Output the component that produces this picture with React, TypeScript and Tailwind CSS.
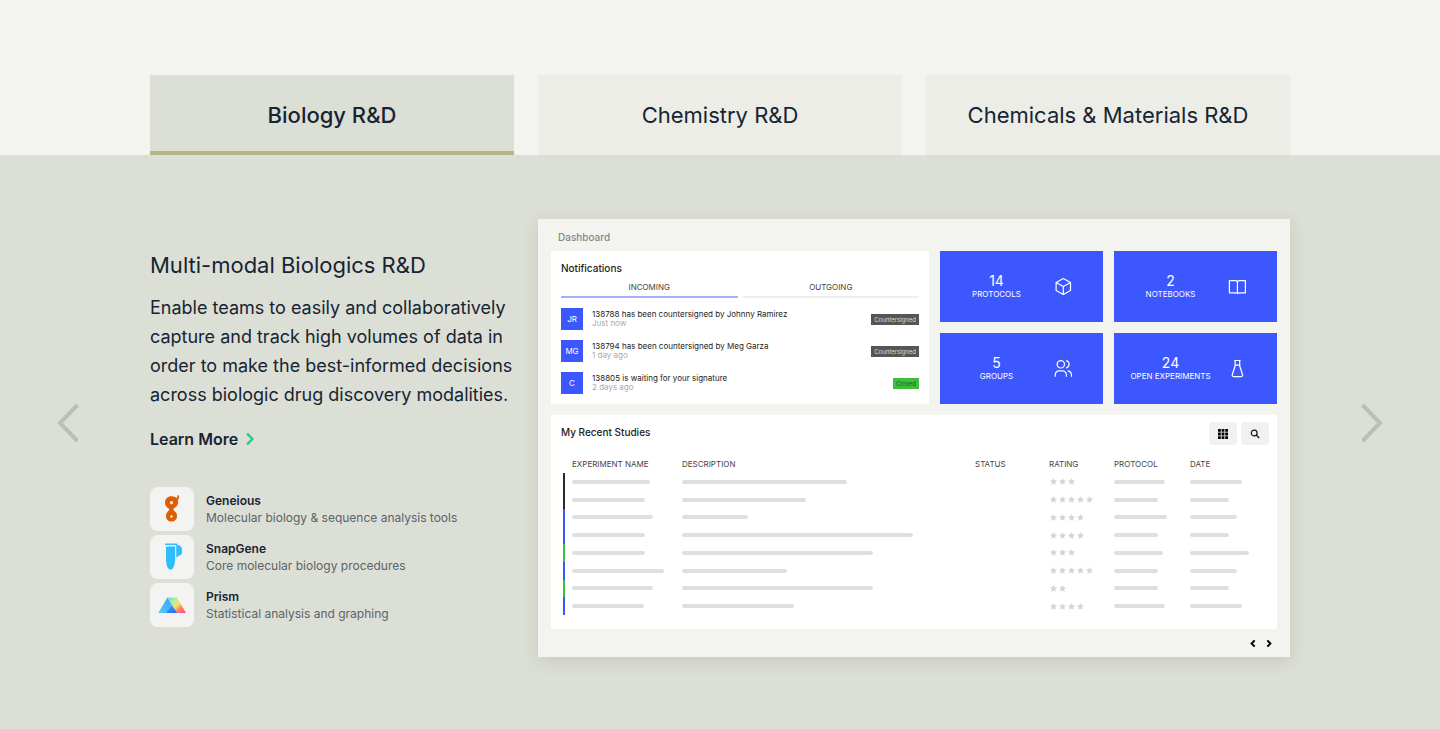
import { useState } from 'react';
import type { ReactNode } from 'react';

const tabs = ['Biology R&D', 'Chemistry R&D', 'Chemicals & Materials R&D'];

type Study = { color: string; name: number; description: number; rating: number; protocol: number; date: number };

const studies: Study[] = [
  { color: '#2a2a2a', name: 78, description: 165, rating: 3, protocol: 51, date: 52 },
  { color: '#2a2a2a', name: 73, description: 124, rating: 5, protocol: 44, date: 39 },
  { color: '#3d57ff', name: 81, description: 66, rating: 4, protocol: 53, date: 47 },
  { color: '#3d57ff', name: 73, description: 231, rating: 4, protocol: 44, date: 39 },
  { color: '#3cbf3c', name: 73, description: 191, rating: 3, protocol: 49, date: 59 },
  { color: '#3d57ff', name: 92, description: 105, rating: 5, protocol: 44, date: 47 },
  { color: '#3cbf3c', name: 81, description: 191, rating: 2, protocol: 44, date: 39 },
  { color: '#3d57ff', name: 72, description: 112, rating: 4, protocol: 51, date: 52 },
];

const notifications = [
  { initials: 'JR', text: '138788 has been countersigned by Johnny Ramirez', time: 'Just now', status: 'Countersigned' },
  { initials: 'MG', text: '138794 has been countersigned by Meg Garza', time: '1 day ago', status: 'Countersigned' },
  { initials: 'C', text: '138805 is waiting for your signature', time: '2 days ago', status: 'Closed' },
];

function GeneiousLogo() {
  return (
    <svg viewBox="0 0 44 44" className="size-11" aria-hidden="true">
      <path
        fill="#e05c00"
        d="M21.5 9.300c2.200 0 3.800.8 4.800 1.600.9-.2 1.300-.8 1-2.200l1-.6c1.300 1.500 1 4-.6 5.100.4 1 .5 2 .3 3-.4 2.500-1.900 3.900-3.700 4.900-.8.500-1 1-.7 1.800.2.500.6.900 1.200 1.400 1.500 1.200 2.200 2.700 2.200 4.600 0 3.300-2.400 5.700-5.500 5.700s-5.500-2.400-5.500-5.700c0-1.900.8-3.500 2.200-4.600 1.200-.9 1.400-2 .5-2.800-2.200-1.200-3.700-3.200-3.700-6 0-3.600 2.800-6.200 6.500-6.200Z"
      />
      <circle cx="21.500" cy="15.700" r="1.600" fill="#f3e9e0" />
      <circle cx="21.500" cy="29.500" r="1.300" fill="#f3e9e0" />
    </svg>
  );
}

function SnapGeneLogo() {
  return (
    <svg viewBox="0 0 44 44" className="size-11" aria-hidden="true" fill="#2dbcff">
      <path d="M15 8.400h11c1 0 1.600.6 1.600 1.500V10.300h1.300c.6 0 1 .2 1.400.7l1 1.200c.4.4.6.9.6 1.500v4c0 .6-.2 1.100-.6 1.500l-1 1c-.4.4-.8.6-1.400.6h-1.300v1.400h-1.300V10.800c0-.6-.3-.9-.9-.9H15Z" />
      <path d="M16 11.600h9v12.900c0 4.800-1.700 10.200-4.500 10.200S16 29.300 16 24.500Z" />
    </svg>
  );
}

function PrismLogo() {
  return (
    <svg viewBox="0 0 44 44" className="size-11" aria-hidden="true">
      <defs>
        <linearGradient id="prism-side" x1="0" y1="0" x2="1" y2="1">
          <stop offset="0" stopColor="#55e6f0" />
          <stop offset="0.3" stopColor="#b8f090" />
          <stop offset="0.5" stopColor="#f7e070" />
          <stop offset="0.72" stopColor="#ff8060" />
          <stop offset="1" stopColor="#ff3f9e" />
        </linearGradient>
        <linearGradient id="prism-left" x1="1" y1="0" x2="0" y2="1">
          <stop offset="0" stopColor="#3f9cff" />
          <stop offset="1" stopColor="#4fd0f0" />
        </linearGradient>
        <linearGradient id="prism-front" x1="0" y1="0" x2="1" y2="1">
          <stop offset="0" stopColor="#4a9cff" />
          <stop offset="1" stopColor="#1e6bff" />
        </linearGradient>
      </defs>
      <path d="M17.500 14.500h9.500L36 30H26Z" fill="url(#prism-side)" />
      <path d="M17.500 14.500l4.300 7.500L16.500 30H8.200Z" fill="url(#prism-left)" />
      <path d="M21.800 22L27 30H16Z" fill="url(#prism-front)" />
    </svg>
  );
}

const tools = [
  { name: 'Geneious', description: 'Molecular biology & sequence analysis tools', logo: <GeneiousLogo /> },
  { name: 'SnapGene', description: 'Core molecular biology procedures', logo: <SnapGeneLogo /> },
  { name: 'Prism', description: 'Statistical analysis and graphing', logo: <PrismLogo /> },
];

function LineIcon({ children }: { children: ReactNode }) {
  return (
    <svg
      viewBox="0 0 20 20"
      className="size-5 shrink-0"
      fill="none"
      stroke="currentColor"
      strokeWidth="1.2"
      strokeLinejoin="round"
      aria-hidden="true"
    >
      {children}
    </svg>
  );
}

const stats = [
  {
    value: '14',
    label: 'PROTOCOLS',
    icon: (
      <LineIcon>
        <path d="M10.300 1.600l7.200 4v8l-7.200 4-7.200-4V5.600ZM3.100 5.600l7.200 4 7.200-4M10.300 9.600v8" />
      </LineIcon>
    ),
  },
  {
    value: '2',
    label: 'NOTEBOOKS',
    icon: (
      <LineIcon>
        <path d="M2.400 3.600h5.600c1.200 0 2.100.4 2.400 1.100.3-.7 1.200-1.100 2.400-1.100h5.600v12.200h-5.600c-1.200 0-2.100.2-2.400.7-.3-.5-1.200-.7-2.400-.7H2.400ZM10.400 4.700v11.800" />
      </LineIcon>
    ),
  },
  {
    value: '5',
    label: 'GROUPS',
    icon: (
      <LineIcon>
        <circle cx="7.800" cy="5.300" r="3.700" />
        <path d="M2.200 17.800v-1.700c0-2.700 1.900-4.300 4.300-4.300h2.600c2.400 0 4.300 1.600 4.300 4.300v1.700M13.100 1.700c1.900.4 3 1.900 3 3.600s-1.100 3.200-3 3.600M14.700 11.900c2.300.4 3.800 2 3.800 4.300v1.600" />
      </LineIcon>
    ),
  },
  {
    value: '24',
    label: 'OPEN EXPERIMENTS',
    icon: (
      <LineIcon>
        <path d="M7.200 1.500h6.400M8.100 1.500v5.300L5.300 15.700c-.3 1.100.1 1.900 1.200 1.900h7.800c1.100 0 1.500-.8 1.200-1.900L12.700 6.800V1.500M8.100 6.200h4.600" />
      </LineIcon>
    ),
  },
];

function Chevron({ direction, className, width }: { direction: 'left' | 'right'; className: string; width: number }) {
  return (
    <svg viewBox="0 0 24 40" className={className} fill="none" stroke="currentColor" strokeWidth={width} aria-hidden="true">
      <path d={direction === 'left' ? 'M21.500 2L4 20l17.500 18' : 'M2.500 2L20 20 2.500 38'} />
    </svg>
  );
}

function Bar({ width }: { width: number }) {
  return <div className="h-1 rounded-full bg-[#dfdfdf]" style={{ width }} />;
}

function Rating({ value }: { value: number }) {
  return (
    <div className="flex gap-0.5" role="img" aria-label={`${value} stars`}>
      {Array.from({ length: value }, (_, i) => (
        <svg key={i} viewBox="0 0 14 14" className="size-[7px]" fill="#d4d4d4" aria-hidden="true">
          <path d="M7 0l2.100 4.600 4.900.6-3.600 3.400.9 5L7 11.200l-4.300 2.400.9-5L0 5.200l4.900-.6Z" />
        </svg>
      ))}
    </div>
  );
}

function Notifications() {
  return (
    <section className="bg-white p-2.5">
      <h3 className="text-[10px] leading-[14px] font-medium text-[#222]">Notifications</h3>
      <div className="mt-1.5 grid grid-cols-2 gap-[5px] text-[8px] leading-[12px] text-[#444]">
        <button type="button" className="border-b-2 border-[#a3b1fb] pb-[3px]">INCOMING</button>
        <button type="button" className="border-b-2 border-[#eee] pb-[3px]">OUTGOING</button>
      </div>
      <ul className="mt-2.5 flex flex-col gap-2.5">
        {notifications.map((item) => (
          <li key={item.text} className="flex items-center">
            <span className="flex size-[22px] shrink-0 items-center justify-center bg-[#3d57ff] text-[8px] text-white">
              {item.initials}
            </span>
            <div className="ml-[9px] flex-1 text-[8px] leading-[9px]">
              <p className="text-[#222]">{item.text}</p>
              <p className="text-[#aaa]">{item.time}</p>
            </div>
            <span
              className={
                item.status === 'Closed'
                  ? 'bg-[#3cbf3c] px-[3px] text-[6px] leading-[11px] text-[#1d5c1d]'
                  : 'bg-[#555] px-[3px] text-[6px] leading-[11px] text-[#ddd]'
              }
            >
              {item.status}
            </span>
          </li>
        ))}
      </ul>
    </section>
  );
}

function Studies() {
  return (
    <section className="bg-white pt-[7px] pr-2 pb-3.5 pl-2.5">
      <div className="flex items-start justify-between">
        <h3 className="pt-[3px] text-[10px] leading-[14px] font-medium text-[#222]">My Recent Studies</h3>
        <div className="flex gap-1">
          <button type="button" aria-label="Grid view" className="flex h-[23px] w-7 items-center justify-center rounded-sm bg-[#f1f1f1]">
            <svg viewBox="0 0 10 10" className="size-2.5" aria-hidden="true">
              <path d="M0 0h2.800v2.800H0zM3.600 0h2.800v2.800H3.600zM7.200 0H10v2.800H7.200zM0 3.600h2.800v2.800H0zM3.600 3.600h2.800v2.800H3.600zM7.200 3.600H10v2.800H7.200zM0 7.200h2.800V10H0zM3.600 7.200h2.800V10H3.600zM7.200 7.200H10V10H7.200z" />
            </svg>
          </button>
          <button type="button" aria-label="Search" className="flex h-[23px] w-7 items-center justify-center rounded-sm bg-[#f1f1f1]">
            <svg viewBox="0 0 10 10" className="size-2.5" fill="none" stroke="#111" strokeWidth="1.200" aria-hidden="true">
              <circle cx="4.200" cy="4" r="2.900" />
              <path d="M6.200 6l3 3" />
            </svg>
          </button>
        </div>
      </div>
      <table className="mt-2.5 ml-0.5 h-[160px] w-[calc(100%-2px)] table-fixed border-collapse text-left" aria-label="My Recent Studies">
        <colgroup>
          <col className="w-0.5" />
          <col className="w-[117px]" />
          <col />
          <col className="w-[74px]" />
          <col className="w-[65px]" />
          <col className="w-[76px]" />
          <col className="w-[79px]" />
        </colgroup>
        <thead>
          <tr className="h-[18px] text-[8px] leading-[12px] text-[#444]">
            <td className="p-0" />
            <th className="p-0 pl-[7px] font-normal">EXPERIMENT NAME</th>
            <th className="p-0 font-normal">DESCRIPTION</th>
            <th className="p-0 font-normal">STATUS</th>
            <th className="p-0 font-normal">RATING</th>
            <th className="p-0 font-normal">PROTOCOL</th>
            <th className="p-0 font-normal">DATE</th>
          </tr>
        </thead>
        <tbody>
          {studies.map((study, i) => (
            <tr key={i}>
              <td className="p-0" style={{ backgroundColor: study.color }} />
              <td className="p-0 pl-[7px]"><Bar width={study.name} /></td>
              <td className="p-0"><Bar width={study.description} /></td>
              <td className="p-0" />
              <td className="p-0 pl-px"><Rating value={study.rating} /></td>
              <td className="p-0"><Bar width={study.protocol} /></td>
              <td className="p-0"><Bar width={study.date} /></td>
            </tr>
          ))}
        </tbody>
      </table>
    </section>
  );
}

function Dashboard() {
  return (
    <div className="bg-[#f3f4ef] px-[13px] shadow-[0_4px_16px_rgba(60,70,50,0.14)] lg:col-span-2">
      <p className="px-[7px] pt-[11px] pb-[7px] text-[10px] leading-[14px] font-medium text-[#888]">Dashboard</p>
      <div className="grid grid-cols-[378fr_337fr] gap-[11px]">
        <Notifications />
        <div className="grid grid-cols-2 grid-rows-2 gap-[11px]">
          {stats.map((stat) => (
            <div key={stat.label} className="flex items-center bg-[#3d57ff] pr-[30px] text-white">
              <div className="flex-1 text-center whitespace-nowrap">
                <p className="text-[14px] leading-[14px]">{stat.value}</p>
                <p className="text-[8px] leading-[12px]">{stat.label}</p>
              </div>
              {stat.icon}
            </div>
          ))}
        </div>
        <div className="col-span-2">
          <Studies />
        </div>
      </div>
      <div className="flex h-7 items-center justify-end gap-2 pr-1">
        <button type="button" aria-label="Previous page" className="flex w-2 justify-center text-black">
          <Chevron direction="left" className="h-[7px] w-1.5" width={11} />
        </button>
        <button type="button" aria-label="Next page" className="flex w-2 justify-center text-black">
          <Chevron direction="right" className="h-[7px] w-1.5" width={11} />
        </button>
      </div>
    </div>
  );
}

export default function App() {
  const [active, setActive] = useState(0);

  return (
    <main className="flex min-h-screen flex-col bg-[#f3f4ef] font-['Inter','Liberation_Sans',sans-serif] text-[#172433]">
      <div className="px-6 pt-[75px]">
        <div role="tablist" className="mx-auto grid max-w-[1140px] grid-cols-3 gap-6">
          {tabs.map((tab, i) => (
            <button
              key={tab}
              type="button"
              role="tab"
              aria-selected={i === active}
              onClick={() => setActive(i)}
              className={
                i === active
                  ? 'h-20 border-b-4 border-[#b8b585] bg-[#dcdfd5] pt-1 text-[22px] leading-8 font-medium'
                  : 'h-20 bg-[#ebede6] text-[22px] leading-8'
              }
            >
              {tab}
            </button>
          ))}
        </div>
      </div>
      <section className="flex flex-1 items-start bg-[#dcdfd5] px-14 pt-16 pb-[72px]">
        <div className="flex w-full items-center justify-between">
          <button type="button" aria-label="Previous slide" className="pb-[30px] text-[#bac0b8]">
            <Chevron direction="left" className="h-10 w-6" width={4} />
          </button>
          <div className="mx-auto grid max-w-[1140px] flex-1 items-center gap-6 lg:grid-cols-3">
            <div>
              <h2 className="text-[22px] leading-8">Multi-modal Biologics R&amp;D</h2>
              <p className="mt-3 text-[18px] leading-[29px]">
                Enable teams to easily and collaboratively capture and track high volumes of data in order to make the
                best-informed decisions across biologic drug discovery modalities.
              </p>
              <a href="#learn-more" className="mt-[18px] flex items-center gap-2 text-base leading-6 font-semibold">
                Learn More
                <Chevron direction="right" className="h-3 w-2 text-[#26c994]" width={8} />
              </a>
              <ul className="mt-9 flex flex-col gap-1">
                {tools.map((tool) => (
                  <li key={tool.name} className="flex items-center gap-3">
                    <span className="size-11 shrink-0 rounded-lg bg-[#f3f4f2]">{tool.logo}</span>
                    <div className="text-[12px] leading-[17px]">
                      <p className="font-semibold">{tool.name}</p>
                      <p className="text-[#5b6468]">{tool.description}</p>
                    </div>
                  </li>
                ))}
              </ul>
            </div>
            <Dashboard />
          </div>
          <button type="button" aria-label="Next slide" className="pb-[30px] text-[#bac0b8]">
            <Chevron direction="right" className="h-10 w-6" width={4} />
          </button>
        </div>
      </section>
    </main>
  );
}
